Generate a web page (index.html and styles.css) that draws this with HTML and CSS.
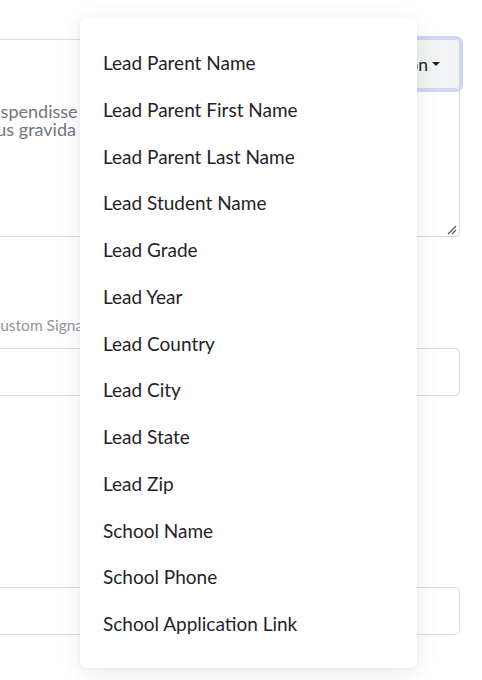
FILE: index.html
```html
<!DOCTYPE html>
<html lang="en">
<head>
<meta charset="utf-8">
<title>Personalization</title>
<link rel="stylesheet" href="styles.css">
</head>
<body>
<div class="page">
  <div class="editor">
    <div class="editor-head">
      <button class="perso-btn" type="button">Personalization <span class="caret"></span></button>
    </div>
    <div class="editor-body">
      <div class="line l1">Suspendisse</div>
      <div class="line l2">luctus gravida</div>
    </div>
    <svg class="grip" width="10" height="10" viewBox="0 0 10 10" aria-hidden="true">
      <path d="M1 9 L9 1 M5 9 L9 5" stroke="#555" stroke-width="1.2" fill="none"/>
    </svg>
  </div>

  <div class="field">
    <div class="label">Custom Signature</div>
    <div class="input"></div>
  </div>

  <div class="field field-2">
    <div class="input"></div>
  </div>
</div>

<div class="menu">
  <div class="item">Lead Parent Name</div>
  <div class="item">Lead Parent First Name</div>
  <div class="item">Lead Parent Last Name</div>
  <div class="item">Lead Student Name</div>
  <div class="item">Lead Grade</div>
  <div class="item">Lead Year</div>
  <div class="item">Lead Country</div>
  <div class="item">Lead City</div>
  <div class="item">Lead State</div>
  <div class="item">Lead Zip</div>
  <div class="item">School Name</div>
  <div class="item">School Phone</div>
  <div class="item">School Application Link</div>
</div>
</body>
</html>
```

FILE: styles.css
```css
html, body {
  margin: 0;
  padding: 0;
  background: #ffffff;
}

body {
  font-family: Lato, "Noto Sans", sans-serif;
  width: 482px;
  height: 680px;
  overflow: hidden;
  position: relative;
}

.page {
  width: 760px;
  margin-left: -300px;
  padding-top: 39px;
}

.editor {
  position: relative;
  height: 198px;
  border: 1px solid #dcdcdc;
  border-radius: 4px;
  box-sizing: border-box;
}

.editor-head {
  display: flex;
  justify-content: flex-end;
  margin: -1px -1px 0 0;
}

.perso-btn {
  height: 50px;
  padding: 0 19px 0 16px;
  border: 1px solid #d6d8dc;
  border-radius: 4px;
  background: linear-gradient(90deg, #f8f9fa, #f1f2f4);
  box-shadow: 0 0 0 3px #cdd6f8;
  font-family: Lato, sans-serif;
  font-size: 17.5px;
  color: #212529;
  display: flex;
  align-items: center;
  gap: 2px;
}

.caret {
  display: inline-block;
  width: 0;
  height: 0;
  border-left: 4px solid transparent;
  border-right: 4px solid transparent;
  border-top: 4px solid #222;
  margin-left: 2px;
}

.editor-body {
  padding: 13px 0 0 300px;
  font-size: 18px;
  line-height: 18px;
  color: #6f7780;
  white-space: nowrap;
}

.line.l1 { margin-left: -20px; }
.line.l2 { margin-left: -34px; }

.grip {
  position: absolute;
  right: 2px;
  bottom: 1px;
}

.field {
  margin-top: 78px;
}

.label {
  font-size: 15.5px;
  line-height: 20px;
  color: #8f959c;
  padding-left: 290px;
  margin-bottom: 13px;
}

.input {
  height: 48px;
  box-sizing: border-box;
  border: 1px solid #dcdbe8;
  border-radius: 5px;
  background: #fff;
}

.field-2 {
  margin-top: 191px;
}

.menu {
  position: absolute;
  left: 80px;
  top: 18px;
  width: 337px;
  box-sizing: border-box;
  padding: 22px 0 20px;
  background: #ffffff;
  border-radius: 6px;
  box-shadow: 0 4px 24px rgba(0, 0, 0, 0.09), 0 1px 3px rgba(0, 0, 0, 0.04);
}

.item {
  height: 46.75px;
  line-height: 46.75px;
  padding: 0 23px;
  font-size: 19px;
  color: #1f2328;
  white-space: nowrap;
}
```
